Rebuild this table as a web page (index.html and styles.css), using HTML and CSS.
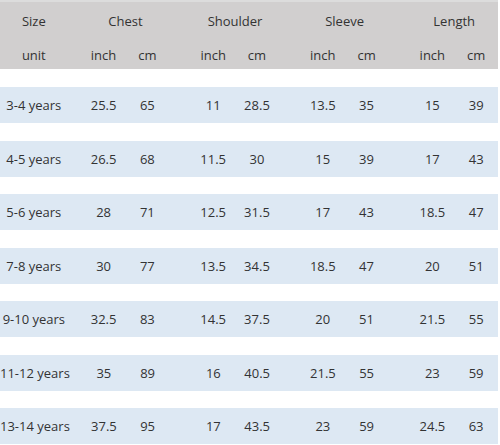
FILE: index.html
```html
<!DOCTYPE html>
<html>
<head>
<meta charset="utf-8">
<link rel="stylesheet" href="styles.css">
</head>
<body>
<div class="chart">
  <div class="head">
    <div class="row title-row">
      <div class="size">Size</div>
      <div class="grp first">Chest</div>
      <div class="grp">Shoulder</div>
      <div class="grp">Sleeve</div>
      <div class="grp">Length</div>
    </div>
    <div class="row unit-row">
      <div class="size">unit</div>
      <div class="c g1">inch</div><div class="c">cm</div>
      <div class="c g">inch</div><div class="c">cm</div>
      <div class="c g">inch</div><div class="c">cm</div>
      <div class="c g">inch</div><div class="c">cm</div>
    </div>
  </div>
  <div class="body">
    <div class="row data"><div class="size">3-4 years</div><div class="c g1">25.5</div><div class="c">65</div><div class="c g">11</div><div class="c">28.5</div><div class="c g">13.5</div><div class="c">35</div><div class="c g">15</div><div class="c">39</div></div>
    <div class="row data"><div class="size">4-5 years</div><div class="c g1">26.5</div><div class="c">68</div><div class="c g">11.5</div><div class="c">30</div><div class="c g">15</div><div class="c">39</div><div class="c g">17</div><div class="c">43</div></div>
    <div class="row data"><div class="size">5-6 years</div><div class="c g1">28</div><div class="c">71</div><div class="c g">12.5</div><div class="c">31.5</div><div class="c g">17</div><div class="c">43</div><div class="c g">18.5</div><div class="c">47</div></div>
    <div class="row data"><div class="size">7-8 years</div><div class="c g1">30</div><div class="c">77</div><div class="c g">13.5</div><div class="c">34.5</div><div class="c g">18.5</div><div class="c">47</div><div class="c g">20</div><div class="c">51</div></div>
    <div class="row data"><div class="size">9-10 years</div><div class="c g1">32.5</div><div class="c">83</div><div class="c g">14.5</div><div class="c">37.5</div><div class="c g">20</div><div class="c">51</div><div class="c g">21.5</div><div class="c">55</div></div>
    <div class="row data"><div class="size">11-12 years</div><div class="c g1">35</div><div class="c">89</div><div class="c g">16</div><div class="c">40.5</div><div class="c g">21.5</div><div class="c">55</div><div class="c g">23</div><div class="c">59</div></div>
    <div class="row data"><div class="size">13-14 years</div><div class="c g1">37.5</div><div class="c">95</div><div class="c g">17</div><div class="c">43.5</div><div class="c g">23</div><div class="c">59</div><div class="c g">24.5</div><div class="c">63</div></div>
  </div>
</div>
</body>
</html>
```

FILE: styles.css
```css
html, body {
  margin: 0;
  padding: 0;
  background: #ffffff;
}
.chart {
  width: 498px;
  font-family: "Open Sans", "Noto Sans", sans-serif;
  font-size: 13px;
  color: #333333;
}
.head {
  background: #d1cfcf;
  border-top: 2px solid #dcdcdc;
  height: 67px;
  display: flex;
  flex-direction: column;
}
.row {
  display: flex;
  align-items: center;
}
.title-row {
  height: 38px;
}
.unit-row {
  height: 29px;
  padding-bottom: 0;
}
.size {
  width: 68px;
  text-align: center;
  white-space: nowrap;
}
.grp {
  width: 88px;
  margin-left: 22px;
  text-align: center;
}
.grp.first {
  margin-left: 14px;
}
.c {
  width: 44px;
  text-align: center;
}
.c.g1 {
  margin-left: 14px;
}
.c.g {
  margin-left: 22px;
}
.body {
  display: flex;
  flex-direction: column;
  gap: 17.5px;
  padding-top: 18px;
}
.data {
  height: 36px;
  background: #dde8f3;
}
```
